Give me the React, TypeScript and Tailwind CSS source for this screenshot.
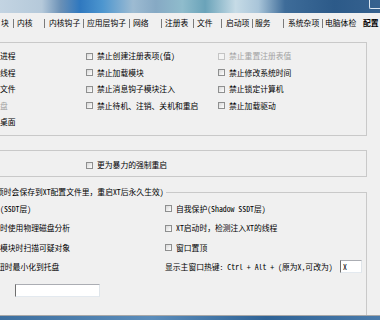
import React from 'react';

const tabs = [
  { label: '块', cls: 'w-[13px] pl-[1px]' },
  { label: '内核', cls: 'w-[30px] pl-[3px]' },
  { label: '内核钩子', cls: 'w-[38px] pl-[4px]' },
  { label: '应用层钩子', cls: 'w-[45px] pl-[3px]' },
  { label: '网络', cls: 'w-[31px] pl-[3px]' },
  { label: '注册表', cls: 'w-[31px] pl-[3px]' },
  { label: '文件', cls: 'w-[27px] pl-[3px]' },
  { label: '启动项', cls: 'w-[30px] pl-[4px]' },
  { label: '服务', cls: 'w-[30px] pl-[2px]' },
  { label: '系统杂项', cls: 'w-[38px] pl-[4px]' },
  { label: '电脑体检', cls: 'w-[40px] pl-[2px]' },
];

const Box = ({ disabled }: { disabled?: boolean }) => (
  <span
    className={
      disabled
        ? 'w-[7px] h-[7px] shrink-0 border border-[#c4c4c4] bg-[#f4f4f4]'
        : 'w-[7px] h-[7px] shrink-0 border border-[#8e8f8f] bg-gradient-to-br from-[#d8d8d8] to-[#ffffff]'
    }
  />
);

const Check = ({ label, disabled }: { label: string; disabled?: boolean }) => (
  <div className="flex items-center gap-[4px] whitespace-nowrap">
    <Box disabled={disabled} />
    <span className={disabled ? 'text-[#a3a3a3]' : 'text-black'}>{label}</span>
  </div>
);

// 三列的禁止项
const lockRows: [string, boolean, string, string, boolean][] = [
  ['进程', false, '禁止创建注册表项(值)', '禁止重置注册表值', true],
  ['线程', false, '禁止加载模块', '禁止修改系统时间', false],
  ['文件', false, '禁止消息钩子模块注入', '禁止锁定计算机', false],
  ['盘', true, '禁止待机、注销、关机和重启', '禁止加载驱动', false],
  ['桌面', false, '', '', false],
];

const App = () => {
  return (
    <div className="w-[380px] h-[320px] overflow-hidden bg-[#f0f0f0] text-black text-[7.8px] leading-[12px] font-['Noto_Sans_Mono_CJK_SC','Noto_Sans_CJK_SC',sans-serif]">
      {/* Title bar */}
      <div className="h-[13px] flex justify-end bg-[linear-gradient(90deg,#c3d4e2_0%,#b5c9da_11%,#6a90b6_16%,#2f78bf_21%,#4d96cf_27%,#9dbbd2_35%,#86a9c4_41%,#8fbccc_48%,#6aa3b9_54%,#c6dbe6_62%,#a9c5d9_68%,#3e6c99_75%,#2c5a89_88%,#36628f_100%)]">
        <div className="w-[11px] h-[9px] border-l border-b border-[#dbe6f1] rounded-bl-[2px]" />
      </div>

      {/* Tabs */}
      <div className="h-[20px] flex items-center whitespace-nowrap">
        {tabs.map((t) => (
          <React.Fragment key={t.label}>
            <span className={`shrink-0 ${t.cls}`}>{t.label}</span>
            {t.label !== '电脑体检' && <span className="shrink-0 w-px h-[9px] bg-[#7a7a7a]" />}
          </React.Fragment>
        ))}
        <span className="shrink-0 font-bold">配置</span>
      </div>

      {/* Group 1 */}
      <div className="mt-[9px] -ml-[50px] w-[417px] h-[94px] border border-[#c9c9c9] pl-[49px] pt-[5px]">
        {lockRows.map(([a, ad, b, c, cd], i) => (
          <div key={i} className="h-[16.5px] grid grid-cols-[86px_132px_1fr] items-center">
            <span className={ad ? 'text-[#a3a3a3] whitespace-nowrap' : 'whitespace-nowrap'}>{a}</span>
            <div>{b && <Check label={b} />}</div>
            <div>{c && <Check label={c} disabled={cd} />}</div>
          </div>
        ))}
      </div>

      {/* Group 2 */}
      <div className="mt-[14px] -ml-[50px] w-[417px] h-[27px] border border-[#c9c9c9] pl-[135px] pt-[8px]">
        <Check label="更为暴力的强制重启" />
      </div>

      {/* Group 3 */}
      <fieldset className="mt-[9px] -ml-[50px] w-[417px] h-[129px] border-t border-l border-r border-[#c9c9c9] pl-[49px] pt-[1px]">
        <legend className="-ml-[4px] pr-[2px] leading-[12px] whitespace-nowrap">
          项时会保存到XT配置文件里，重启XT后永久生效)
        </legend>
        <div className="grid grid-cols-[165px_1fr] auto-rows-[19.5px] items-center whitespace-nowrap">
          <span>(SSDT层)</span>
          <Check label="自我保护(Shadow SSDT层)" />
          <span>时使用物理磁盘分析</span>
          <Check label="XT启动时，检测注入XT的线程" />
          <span>模块时扫描可疑对象</span>
          <Check label="窗口置顶" />
          <span className="-ml-[3px]">钮时最小化到托盘</span>
          <div className="grid grid-cols-[175px_22px] items-center">
            <span>显示主窗口热键: Ctrl + Alt + (原为X,可改为)</span>
            <div className="h-[13px] -mt-[2px] bg-white border border-t-[#abadb3] border-l-[#6f6f6f] border-r-[#dfe5ea] border-b-[#e3e9ef] pl-[2px] leading-[11px]">
              X
            </div>
          </div>
        </div>
        <div className="mt-[7px] ml-[15px] w-[85px] h-[13px] bg-white border border-t-[#abadb3] border-l-[#6f6f6f] border-r-[#dfe5ea] border-b-[#e3e9ef]" />
      </fieldset>

      {/* Bottom edge */}
      <div className="h-px bg-[#a8a8a8]" />
      <div className="h-[4px] bg-[linear-gradient(90deg,#3d6f9f,#5b8dbb_40%,#2f6396_70%,#4a7bab)]" />
    </div>
  );
};

export default App;
